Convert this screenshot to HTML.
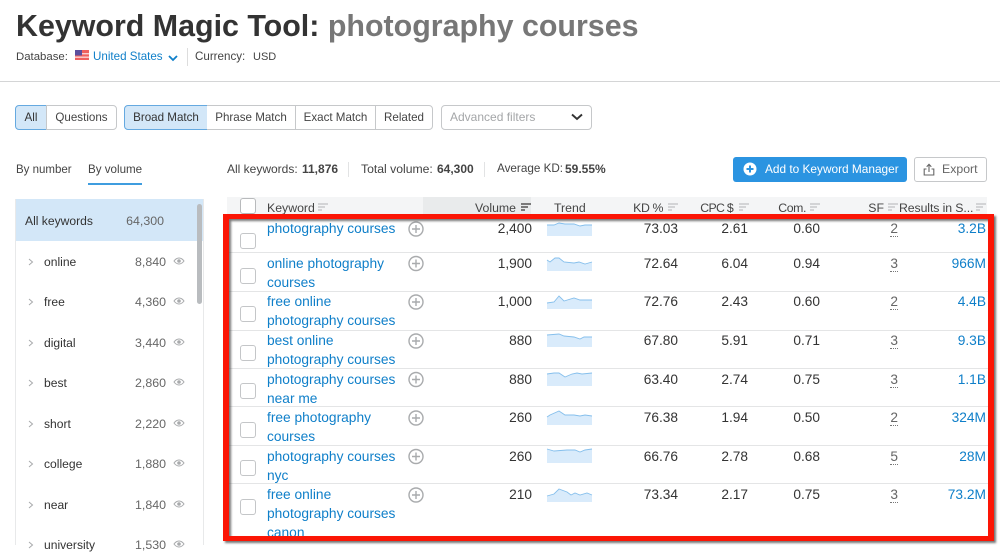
<!DOCTYPE html>
<html lang="en"><head><meta charset="utf-8"><title>Keyword Magic Tool</title>
<style>
html,body{margin:0;padding:0;background:#fff}
body{width:1000px;height:545px;overflow:hidden;position:relative;font-family:"Liberation Sans",sans-serif;color:#333;font-size:12px}
.t{position:absolute;white-space:nowrap;line-height:20px;height:20px}
.r{text-align:right}
.b{position:absolute;box-sizing:border-box}
.seg{position:absolute;box-sizing:border-box;top:105px;height:25px;border:1px solid #c6c8ca;line-height:23px;text-align:center;font-size:11.6px;color:#444;background:#fff}
.on{background:#d3e7f8;border-color:#65a9e0;color:#333}
.l{color:#0f7fc9;font-size:13.75px;transform:translateY(1px)}
.n{font-size:13.7px;color:#333;transform:translateY(1px)}
.h{font-size:12.3px;color:#444;top:198px}
.tight{letter-spacing:-.4px}
.cb{position:absolute;box-sizing:border-box;left:240px;width:16px;height:16px;border:1.3px solid #c4c6c8;border-radius:3px;background:#fff}
.side{font-size:12.1px;color:#333}
.num{font-size:12.4px;color:#666}
svg{position:absolute;overflow:visible}
.dot{border-bottom:1px dotted #777;height:15px;line-height:15px;color:#666;font-size:13.7px}
</style></head><body>

<div class="t" style="left:16px;top:7px;height:38px;line-height:38px;font-size:30.4px;font-weight:bold;color:#333">Keyword Magic Tool: <span style="color:#777">photography courses</span></div>

<div class="t" style="left:16px;top:47px;font-size:11.4px;color:#444">Database:</div>
<svg style="left:75px;top:50px" width="14" height="11" viewBox="0 0 14 11"><rect width="14" height="10" fill="#f0605e"/><rect y="3" width="14" height="1.4" fill="#fbd0d0"/><rect y="6.500" width="14" height="1.4" fill="#fbd0d0"/><rect width="7" height="5.500" fill="#5c4f9e"/></svg>
<div class="t" style="left:93px;top:47px;font-size:11.6px;color:#0f7fc9">United States</div>
<svg style="left:168px;top:55px" width="10" height="7" viewBox="0 0 10 7"><path d="M1 1l4 4 4-4" fill="none" stroke="#0f7fc9" stroke-width="1.800"/></svg>
<div class="b" style="left:187px;top:48px;width:1px;height:18px;background:#ddd"></div>
<div class="t" style="left:195px;top:47px;font-size:11.600px;color:#444">Currency:</div>
<div class="t" style="left:253px;top:47px;font-size:11px;color:#444">USD</div>
<div class="b" style="left:0;top:81px;width:1000px;height:1px;background:#d4d5d6"></div>

<div class="seg on" style="left:15px;width:32px;border-radius:4px 0 0 4px">All</div>
<div class="seg" style="left:46px;width:71px;border-radius:0 4px 4px 0">Questions</div>
<div class="seg on" style="left:124px;width:84px;border-radius:4px 0 0 4px">Broad Match</div>
<div class="seg" style="left:207px;width:89px;border-left:0">Phrase Match</div>
<div class="seg" style="left:295px;width:81px">Exact Match</div>
<div class="seg" style="left:375px;width:58px;border-radius:0 4px 4px 0">Related</div>
<div class="seg" style="left:441px;width:151px;border-radius:4px;text-align:left;padding-left:8px;color:#a4a6a8;font-size:12px">Advanced filters</div>
<svg style="left:571px;top:113px" width="12" height="8" viewBox="0 0 12 8"><path d="M1 1.500l5 4.500 5-4.500" fill="none" stroke="#333" stroke-width="1.900"/></svg>

<div class="t" style="left:16px;top:160px;font-size:11.500px;color:#444">By number</div>
<div class="t" style="left:88px;top:160px;font-size:11.600px;color:#444">By volume</div>
<div class="b" style="left:88px;top:183px;width:54px;height:2px;background:#3f9ddf"></div>

<div class="t" style="left:227px;top:159px;font-size:12px;color:#444">All keywords:</div>
<div class="t" style="left:302px;top:159px;font-size:12px;font-weight:bold;color:#444">11,876</div>
<div class="b" style="left:348px;top:162px;width:1px;height:15px;background:#e2e3e4"></div>
<div class="t" style="left:361px;top:159px;font-size:12.200px;color:#444">Total volume:</div>
<div class="t" style="left:437px;top:159px;font-size:12px;font-weight:bold;color:#444">64,300</div>
<div class="b" style="left:484px;top:162px;width:1px;height:15px;background:#e2e3e4"></div>
<div class="t" style="left:497px;top:159px;font-size:11.700px;color:#444">Average KD:</div>
<div class="t" style="left:565px;top:159px;font-size:12px;font-weight:bold;color:#444">59.55%</div>

<div class="b" style="left:733px;top:157px;width:174px;height:25px;background:#2b94e1;border-radius:3px"></div>
<svg style="left:743px;top:162px" width="14" height="14" viewBox="0 0 14 14"><circle cx="7" cy="7" r="6.500" fill="#fff"/><path d="M7 3.500v7M3.500 7h7" stroke="#2b94e1" stroke-width="2"/></svg>
<div class="t" style="left:765px;top:159px;font-size:11.850px;color:#fff">Add to Keyword Manager</div>
<div class="b" style="left:914px;top:157px;width:73px;height:25px;background:#fff;border:1px solid #c6c8ca;border-radius:3px"></div>
<svg style="left:923px;top:163px" width="12" height="13" viewBox="0 0 12 13"><path d="M6 9V1.500M3.700 3.700L6 1.300l2.300 2.400M3.500 6H1.200v6h9.600V6H8.500" fill="none" stroke="#666" stroke-width="1.100"/></svg>
<div class="t" style="left:942px;top:159px;font-size:12.300px;color:#666">Export</div>

<!-- side panel -->
<div class="b" style="left:15px;top:199px;width:189px;height:346px;border:1px solid #e8e9ea;border-bottom:0"></div>
<div class="b" style="left:16px;top:199px;width:187px;height:42px;background:#d3e7f8"></div>
<div class="b" style="left:197px;top:204px;width:5px;height:100px;border-radius:3px;background:#b9bcbf"></div>
<div class="t side" style="left:25px;top:211px">All keywords</div>
<div class="t num r" style="right:836px;top:211px">64,300</div>
<div class="t side" style="left:44px;top:252px">online</div><div class="t num r" style="right:834px;top:252px">8,840</div>
<div class="t side" style="left:44px;top:292px">free</div><div class="t num r" style="right:834px;top:292px">4,360</div>
<div class="t side" style="left:44px;top:333px">digital</div><div class="t num r" style="right:834px;top:333px">3,440</div>
<div class="t side" style="left:44px;top:373px">best</div><div class="t num r" style="right:834px;top:373px">2,860</div>
<div class="t side" style="left:44px;top:414px">short</div><div class="t num r" style="right:834px;top:414px">2,220</div>
<div class="t side" style="left:44px;top:454px">college</div><div class="t num r" style="right:834px;top:454px">1,880</div>
<div class="t side" style="left:44px;top:495px">near</div><div class="t num r" style="right:834px;top:495px">1,840</div>
<div class="t side" style="left:44px;top:535px">university</div><div class="t num r" style="right:834px;top:535px">1,530</div>
<svg style="left:0;top:0" width="240" height="545">
<g fill="none" stroke="#a8aaac" stroke-width="1">
<path d="M29 259l3.500 3-3.500 3M29 299l3.500 3-3.500 3M29 340l3.500 3-3.500 3M29 380l3.500 3-3.500 3M29 421l3.500 3-3.500 3M29 461l3.500 3-3.500 3M29 502l3.500 3-3.500 3M29 542l3.500 3-3.500 3"/>
<path d="M174 261c3-4 7-4 10 0c-3 4-7 4-10 0z"/><circle cx="179" cy="261" r="1.300" fill="#a8aaac"/>
<path d="M174 301c3-4 7-4 10 0c-3 4-7 4-10 0z"/><circle cx="179" cy="301" r="1.300" fill="#a8aaac"/>
<path d="M174 342c3-4 7-4 10 0c-3 4-7 4-10 0z"/><circle cx="179" cy="342" r="1.300" fill="#a8aaac"/>
<path d="M174 382c3-4 7-4 10 0c-3 4-7 4-10 0z"/><circle cx="179" cy="382" r="1.300" fill="#a8aaac"/>
<path d="M174 423c3-4 7-4 10 0c-3 4-7 4-10 0z"/><circle cx="179" cy="423" r="1.300" fill="#a8aaac"/>
<path d="M174 463c3-4 7-4 10 0c-3 4-7 4-10 0z"/><circle cx="179" cy="463" r="1.300" fill="#a8aaac"/>
<path d="M174 504c3-4 7-4 10 0c-3 4-7 4-10 0z"/><circle cx="179" cy="504" r="1.300" fill="#a8aaac"/>
<path d="M174 544c3-4 7-4 10 0c-3 4-7 4-10 0z"/><circle cx="179" cy="544" r="1.300" fill="#a8aaac"/>
</g></svg>

<!-- table header -->
<div class="b" style="left:227px;top:197px;width:760px;height:22px;background:#f4f5f6"></div>
<div class="b" style="left:423px;top:197px;width:108px;height:22px;background:#e9ebec"></div>
<div class="b" style="left:240px;top:198px;width:16px;height:16px;background:#fff;border:1.300px solid #b8babc;border-radius:3px"></div>
<div class="t h" style="left:267px">Keyword</div>
<div class="t h r" style="right:484px">Volume</div>
<div class="t h" style="left:554px">Trend</div>
<div class="t h r tight" style="right:337px">KD %</div>
<div class="t h r tight" style="right:267px;letter-spacing:-.7px">CPC $</div>
<div class="t h r tight" style="right:194px">Com.</div>
<div class="t h r" style="right:116px">SF</div>
<div class="t h tight" style="left:899px;letter-spacing:-.1px">Results in S...</div>
<svg style="left:0;top:0" width="1000" height="220">
<g stroke="#c8cacc" stroke-width="1.500" fill="none">
<path d="M318 204h10M318 207h7M318 210h4M668 204h10M668 207h7M668 210h4M739 204h10M739 207h7M739 210h4M810 204h10M810 207h7M810 210h4M888 204h10M888 207h7M888 210h4M976 204h10M976 207h7M976 210h4"/>
<path d="M521 204h10M521 207h7M521 210h4" stroke="#555"/>
</g></svg>

<!-- rows -->
<div class="b" style="left:229px;top:252px;width:760px;height:1px;background:#e4e5e6"></div>
<div class="b" style="left:229px;top:291px;width:760px;height:1px;background:#e4e5e6"></div>
<div class="b" style="left:229px;top:330px;width:760px;height:1px;background:#e4e5e6"></div>
<div class="b" style="left:229px;top:368px;width:760px;height:1px;background:#e4e5e6"></div>
<div class="b" style="left:229px;top:406px;width:760px;height:1px;background:#e4e5e6"></div>
<div class="b" style="left:229px;top:445px;width:760px;height:1px;background:#e4e5e6"></div>
<div class="b" style="left:229px;top:483px;width:760px;height:1px;background:#e4e5e6"></div>

<div class="cb" style="top:233px"></div><div class="cb" style="top:268px"></div><div class="cb" style="top:306px"></div><div class="cb" style="top:345px"></div><div class="cb" style="top:383px"></div><div class="cb" style="top:422px"></div><div class="cb" style="top:460px"></div><div class="cb" style="top:499px"></div>

<div class="t l" style="left:267px;top:218px">photography courses</div>
<div class="t l" style="left:267px;top:253px">online photography</div><div class="t l" style="left:267px;top:272px">courses</div>
<div class="t l" style="left:267px;top:291px">free online</div><div class="t l" style="left:267px;top:310px">photography courses</div>
<div class="t l" style="left:267px;top:330px">best online</div><div class="t l" style="left:267px;top:349px">photography courses</div>
<div class="t l" style="left:267px;top:369px">photography courses</div><div class="t l" style="left:267px;top:388px">near me</div>
<div class="t l" style="left:267px;top:407px">free photography</div><div class="t l" style="left:267px;top:426px">courses</div>
<div class="t l" style="left:267px;top:446px">photography courses</div><div class="t l" style="left:267px;top:465px">nyc</div>
<div class="t l" style="left:267px;top:484px">free online</div><div class="t l" style="left:267px;top:503px">photography courses</div><div class="t l" style="left:267px;top:522px;height:15px;overflow:hidden">canon</div>

<svg style="left:0;top:0" width="1000" height="545"><g fill="none" stroke="#a9abad" stroke-width="1.400">
<circle cx="416" cy="229" r="7"/><path d="M416 225v8M412 229h8"/>
<circle cx="416" cy="263.500" r="7"/><path d="M416 259.500v8M412 263.500h8"/>
<circle cx="416" cy="302" r="7"/><path d="M416 298v8M412 302h8"/>
<circle cx="416" cy="341" r="7"/><path d="M416 337v8M412 341h8"/>
<circle cx="416" cy="379.500" r="7"/><path d="M416 375.500v8M412 379.500h8"/>
<circle cx="416" cy="418" r="7"/><path d="M416 414v8M412 418h8"/>
<circle cx="416" cy="456.500" r="7"/><path d="M416 452.500v8M412 456.500h8"/>
<circle cx="416" cy="495" r="7"/><path d="M416 491v8M412 495h8"/>
</g>
<g transform="translate(547,222)"><path d="M0 3L7 3 12 1 18 2 27 2 33 4 38 3 45 3V14H0Z" fill="#d9ebfb"/><path d="M0 3L7 3 12 1 18 2 27 2 33 4 38 3 45 3" fill="none" stroke="#85bfec" stroke-width=".9"/></g>
<g transform="translate(547,257)"><path d="M0 3L3 5 8 1 12 1 17 5 27 6 32 5 38 7 45 5V14H0Z" fill="#d9ebfb"/><path d="M0 3L3 5 8 1 12 1 17 5 27 6 32 5 38 7 45 5" fill="none" stroke="#85bfec" stroke-width=".9"/></g>
<g transform="translate(547,295)"><path d="M0 8L7 7 12 1 17 6 27 3 33 5 45 5V14H0Z" fill="#d9ebfb"/><path d="M0 8L7 7 12 1 17 6 27 3 33 5 45 5" fill="none" stroke="#85bfec" stroke-width=".9"/></g>
<g transform="translate(547,333)"><path d="M0 2L12 1 17 3 27 4 33 6 37 4 45 4V14H0Z" fill="#d9ebfb"/><path d="M0 2L12 1 17 3 27 4 33 6 37 4 45 4" fill="none" stroke="#85bfec" stroke-width=".9"/></g>
<g transform="translate(547,372)"><path d="M0 2L7 1 12 1 18 5 25 2 30 1 35 2 45 1V14H0Z" fill="#d9ebfb"/><path d="M0 2L7 1 12 1 18 5 25 2 30 1 35 2 45 1" fill="none" stroke="#85bfec" stroke-width=".9"/></g>
<g transform="translate(547,411)"><path d="M0 6L3 4 12 0 18 4 27 4 33 5 38 4 45 5V14H0Z" fill="#d9ebfb"/><path d="M0 6L3 4 12 0 18 4 27 4 33 5 38 4 45 5" fill="none" stroke="#85bfec" stroke-width=".9"/></g>
<g transform="translate(547,449)"><path d="M0 0L7 2 20 1 28 1 33 3 38 1 45 0V14H0Z" fill="#d9ebfb"/><path d="M0 0L7 2 20 1 28 1 33 3 38 1 45 0" fill="none" stroke="#85bfec" stroke-width=".9"/></g>
<g transform="translate(547,488)"><path d="M0 8L7 6 12 1 20 4 24 7 28 5 33 7 40 5 45 7V14H0Z" fill="#d9ebfb"/><path d="M0 8L7 6 12 1 20 4 24 7 28 5 33 7 40 5 45 7" fill="none" stroke="#85bfec" stroke-width=".9"/></g>
</svg>

<!-- numbers -->
<div class="t n r" style="right:468px;top:218px">2,400</div><div class="t n r" style="right:322px;top:218px">73.03</div><div class="t n r" style="right:252px;top:218px">2.61</div><div class="t n r" style="right:180px;top:218px">0.60</div><div class="t dot r" style="right:102px;top:221px">2</div><div class="t l r" style="right:14px;top:218px">3.2B</div>
<div class="t n r" style="right:468px;top:253px">1,900</div><div class="t n r" style="right:322px;top:253px">72.64</div><div class="t n r" style="right:252px;top:253px">6.04</div><div class="t n r" style="right:180px;top:253px">0.94</div><div class="t dot r" style="right:102px;top:256px">3</div><div class="t l r" style="right:14px;top:253px">966M</div>
<div class="t n r" style="right:468px;top:291px">1,000</div><div class="t n r" style="right:322px;top:291px">72.76</div><div class="t n r" style="right:252px;top:291px">2.43</div><div class="t n r" style="right:180px;top:291px">0.60</div><div class="t dot r" style="right:102px;top:294px">2</div><div class="t l r" style="right:14px;top:291px">4.4B</div>
<div class="t n r" style="right:468px;top:330px">880</div><div class="t n r" style="right:322px;top:330px">67.80</div><div class="t n r" style="right:252px;top:330px">5.91</div><div class="t n r" style="right:180px;top:330px">0.71</div><div class="t dot r" style="right:102px;top:333px">3</div><div class="t l r" style="right:14px;top:330px">9.3B</div>
<div class="t n r" style="right:468px;top:369px">880</div><div class="t n r" style="right:322px;top:369px">63.40</div><div class="t n r" style="right:252px;top:369px">2.74</div><div class="t n r" style="right:180px;top:369px">0.75</div><div class="t dot r" style="right:102px;top:372px">3</div><div class="t l r" style="right:14px;top:369px">1.1B</div>
<div class="t n r" style="right:468px;top:407px">260</div><div class="t n r" style="right:322px;top:407px">76.38</div><div class="t n r" style="right:252px;top:407px">1.94</div><div class="t n r" style="right:180px;top:407px">0.50</div><div class="t dot r" style="right:102px;top:410px">2</div><div class="t l r" style="right:14px;top:407px">324M</div>
<div class="t n r" style="right:468px;top:446px">260</div><div class="t n r" style="right:322px;top:446px">66.76</div><div class="t n r" style="right:252px;top:446px">2.78</div><div class="t n r" style="right:180px;top:446px">0.68</div><div class="t dot r" style="right:102px;top:449px">5</div><div class="t l r" style="right:14px;top:446px">28M</div>
<div class="t n r" style="right:468px;top:484px">210</div><div class="t n r" style="right:322px;top:484px">73.34</div><div class="t n r" style="right:252px;top:484px">2.17</div><div class="t n r" style="right:180px;top:484px">0.75</div><div class="t dot r" style="right:102px;top:487px">3</div><div class="t l r" style="right:14px;top:484px">73.2M</div>

<!-- red frame -->
<div class="b" style="left:223px;top:214px;width:771px;height:327px;border:6px solid #fb1505;border-top-width:5px;border-bottom-width:5px;box-shadow:2px 2px 2px rgba(60,60,60,.7),inset 2px 2px 2px rgba(60,60,60,.7)"></div>
</body></html>
